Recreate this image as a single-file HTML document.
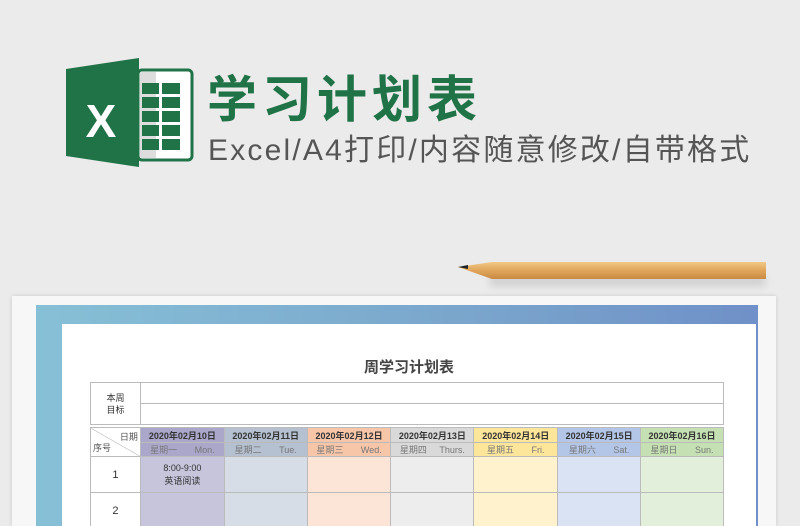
<!DOCTYPE html>
<html><head><meta charset="utf-8"><style>
*{margin:0;padding:0;box-sizing:border-box}
html,body{width:800px;height:526px;overflow:hidden}
body{background:#ebebeb;position:relative;font-family:"Liberation Sans","Noto Sans CJK SC",sans-serif}
.abs{position:absolute}
.t1{left:207px;top:70px;font-size:50px;font-weight:bold;color:#1f7346;letter-spacing:5px;line-height:60px}
.t2{left:208px;top:132px;font-size:30px;color:#555;line-height:38px;letter-spacing:2.2px}
table{border-collapse:collapse;position:absolute;font-size:9px;color:#333}
td{border:1px solid #bbb;text-align:center;padding:0}
</style></head><body>
<svg class="abs" style="left:60px;top:52px" width="140" height="120">
<rect x="78" y="18" width="54" height="90" rx="4" fill="#fff" stroke="#1f7346" stroke-width="3"/>
<rect x="80" y="20" width="16" height="86" fill="#ddd"/>
<g fill="#1f7346">
<rect x="82" y="31" width="17" height="11"/><rect x="102" y="31" width="18" height="11"/>
<rect x="82" y="45" width="17" height="11"/><rect x="102" y="45" width="18" height="11"/>
<rect x="82" y="59" width="17" height="11"/><rect x="102" y="59" width="18" height="11"/>
<rect x="82" y="73" width="17" height="11"/><rect x="102" y="73" width="18" height="11"/>
<rect x="82" y="87" width="17" height="11"/><rect x="102" y="87" width="18" height="11"/>
</g>
<polygon points="6,17 79,6 79,115 6,104" fill="#1f7346"/>
<text x="41" y="85" font-family="Liberation Sans" font-weight="bold" font-size="46" fill="#fff" text-anchor="middle">X</text>
</svg>
<div class="abs t1">学习计划表</div>
<div class="abs t2">Excel/A4打印/内容随意修改/自带格式</div>
<div class="abs" style="left:490px;top:276px;width:275px;height:10px;background:rgba(0,0,0,.12);filter:blur(4px)"></div>
<svg class="abs" style="left:456px;top:260px" width="312" height="24">
<defs><linearGradient id="w" x1="0" y1="0" x2="0" y2="1"><stop offset="0" stop-color="#f1c887"/><stop offset=".5" stop-color="#e0a55a"/><stop offset="1" stop-color="#c98a44"/></linearGradient></defs>
<polygon points="2,7 36,2 310,2 310,19 36,19" fill="url(#w)"/>
<polygon points="2,7 12,5 12,9" fill="#222"/>
</svg>
<div class="abs" style="left:12px;top:296px;width:764px;height:230px;background:#f7f7f7;box-shadow:0 0 4px rgba(0,0,0,.15)"></div>
<div class="abs" style="left:36px;top:305px;width:722px;height:221px;background:linear-gradient(90deg,#86c0d6,#7aa5cc 60%,#6f90c8)"></div>
<div class="abs" style="left:62px;top:324px;width:694px;height:202px;background:#fff"></div>
<div class="abs" style="left:62px;top:356px;width:694px;text-align:center;font-size:15px;font-weight:bold;color:#444">周学习计划表</div>
<table style="left:90px;top:382px;width:634px">
<tr style="height:21px"><td rowspan="2" style="width:50px;font-size:9px;line-height:12px">本周<br>目标</td><td style="border-bottom:1px dotted #999"></td></tr>
<tr style="height:21px"><td></td></tr>
</table>
<table style="left:90px;top:427px;width:634px">
<tr style="height:15px;font-weight:bold;font-size:9px">
<td rowspan="2" style="width:50px;position:relative;background:linear-gradient(to top right,#fff 49%,#aaa 50%,#fff 51%)"><span class="abs" style="right:2px;top:2px;font-weight:normal;color:#555">日期</span><span class="abs" style="left:2px;bottom:2px;font-weight:normal;color:#555">序号</span></td>
<td style="background:#aaa7ca;width:84px">2020年02月10日</td>
<td style="background:#b5c1d0;width:83px">2020年02月11日</td>
<td style="background:#f7c6a9;width:84px">2020年02月12日</td>
<td style="background:#d9d9d9;width:83px">2020年02月13日</td>
<td style="background:#fde59a;width:84px">2020年02月14日</td>
<td style="background:#b4c6e7;width:83px">2020年02月15日</td>
<td style="background:#c5e0b3;width:83px">2020年02月16日</td></tr>
<tr style="height:14px;color:#777;font-size:9px">
<td style="background:#aaa7ca">星期一 &nbsp; &nbsp; &nbsp; Mon.</td>
<td style="background:#b5c1d0">星期二 &nbsp; &nbsp; &nbsp; Tue.</td>
<td style="background:#f7c6a9">星期三 &nbsp; &nbsp; &nbsp; Wed.</td>
<td style="background:#d9d9d9">星期四 &nbsp; &nbsp; Thurs.</td>
<td style="background:#fde59a">星期五 &nbsp; &nbsp; &nbsp; Fri.</td>
<td style="background:#b4c6e7">星期六 &nbsp; &nbsp; &nbsp; Sat.</td>
<td style="background:#c5e0b3">星期日 &nbsp; &nbsp; &nbsp; Sun.</td></tr>
<tr style="height:36px"><td style="font-size:11px">1</td><td style="background:#c6c5dc;line-height:13px">8:00-9:00<br>英语阅读</td><td style="background:#d7dde6"></td><td style="background:#fce4d6"></td><td style="background:#ededed"></td><td style="background:#fff2cc"></td><td style="background:#dae3f3"></td><td style="background:#e2efda"></td></tr>
<tr style="height:36px"><td style="font-size:11px">2</td><td style="background:#c6c5dc"></td><td style="background:#d7dde6"></td><td style="background:#fce4d6"></td><td style="background:#ededed"></td><td style="background:#fff2cc"></td><td style="background:#dae3f3"></td><td style="background:#e2efda"></td></tr>
</table>
</body></html>
